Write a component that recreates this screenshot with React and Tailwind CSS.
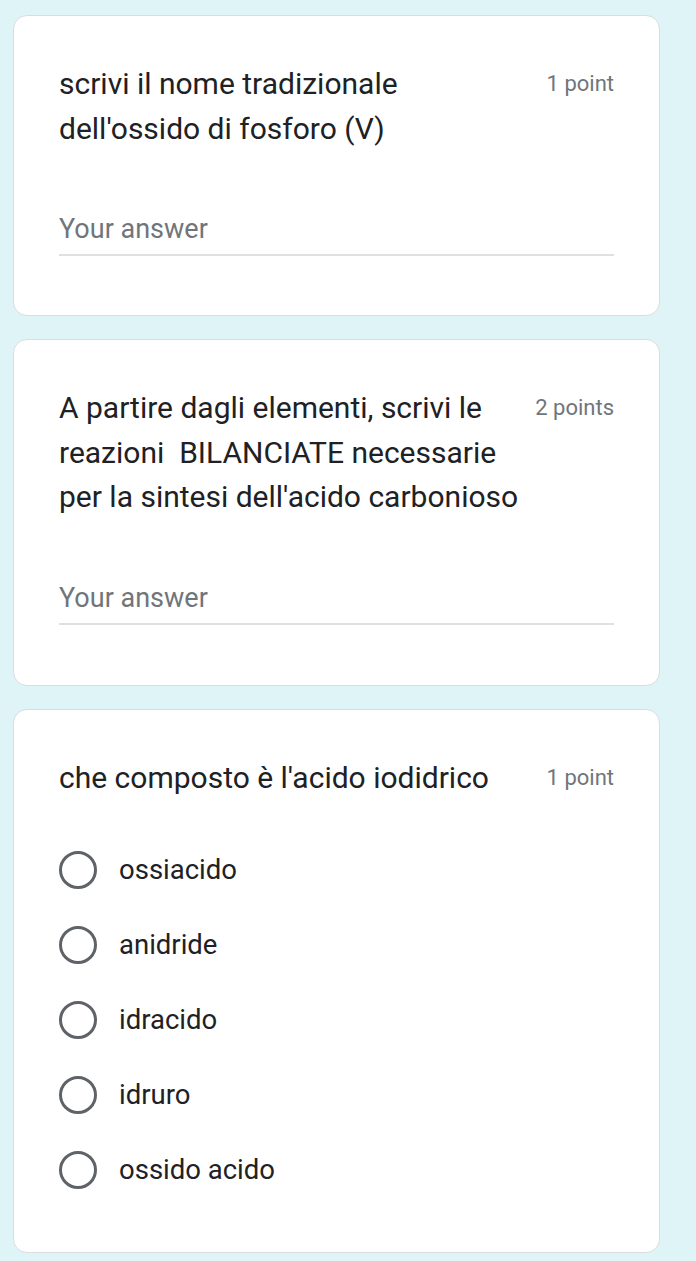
import React from "react";

const font = { fontFamily: "Roboto, 'Noto Sans', sans-serif" };

const TextQuestion = ({ lines, points, top, bottom }) => {
    return (
        <div className={`bg-white border border-[#dadce0] rounded-[14px] px-[45px] ${top}`}>
            <div className="flex justify-between items-start">
                <div className="text-[30px] leading-[44.5px] text-[#202124]">
                    {lines.map((line, i) => (
                        <div key={i} className="whitespace-pre">{line}</div>
                    ))}
                </div>
                <div className="text-[22px] leading-[44px] text-[#70757a] shrink-0">{points}</div>
            </div>
            <div className={`mt-[62px] ${bottom}`}>
                <div className="text-[27px] leading-[32px] text-[#70757a] pb-[9px] border-b-2 border-[#e0e0e0]">Your answer</div>
            </div>
        </div>
    );
};

const options = ["ossiacido", "anidride", "idracido", "idruro", "ossido acido"];

export default function App() {
    return (
        <div className="min-h-[1261px] bg-[#def4f7] pl-[13px] pr-[36px] pt-[15px] pb-[8px] flex flex-col gap-[23px]" style={font}>
            <TextQuestion
                top="pt-[46px]"
                bottom="pb-[59px]"
                lines={["scrivi il nome tradizionale", "dell'ossido di fosforo (V)"]}
                points="1 point"
            />
            <TextQuestion
                top="pt-[46px]"
                bottom="pb-[60px]"
                lines={["A partire dagli elementi, scrivi le", "reazioni  BILANCIATE necessarie", "per la sintesi dell'acido carbonioso"]}
                points="2 points"
            />
            <div className="bg-white border border-[#dadce0] rounded-[14px] px-[45px] pt-[46px] pb-[44px]">
                <div className="flex justify-between items-start">
                    <div className="text-[30px] leading-[44px] text-[#202124]">che composto è l'acido iodidrico</div>
                    <div className="text-[22px] leading-[44px] text-[#70757a] shrink-0">1 point</div>
                </div>
                <div className="mt-[33px] flex flex-col">
                    {options.map((opt) => (
                        <div key={opt} className="flex items-center h-[75px]">
                            <div className="w-[38px] h-[38px] rounded-full border-[3px] border-[#5f6368] shrink-0"></div>
                            <div className="ml-[22px] text-[27.5px] leading-[36px] text-[#202124]">{opt}</div>
                        </div>
                    ))}
                </div>
            </div>
        </div>
    );
}
